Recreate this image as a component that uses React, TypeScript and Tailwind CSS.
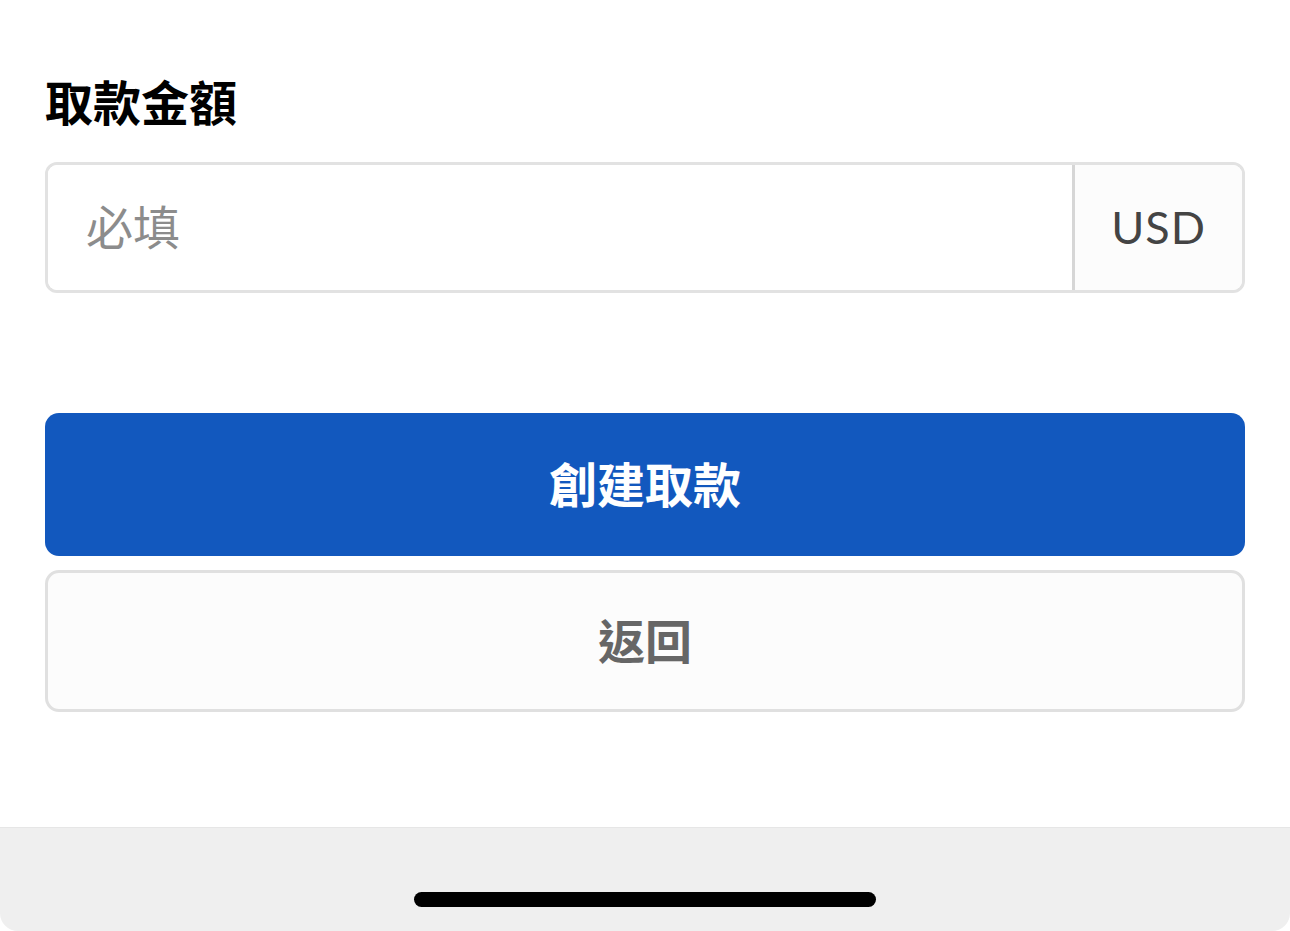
export default function App() {
  return (
    <div
      className="w-[1290px] h-[931px] bg-white flex flex-col overflow-hidden"
      style={{ fontFamily: '"Noto Sans", "Noto Sans CJK TC", sans-serif' }}
    >
      <div className="flex-1 flex flex-col px-[45px] pt-[73px]">
        {/* label */}
        <div className="text-[48px] leading-[60px] font-bold text-black">取款金額</div>

        {/* amount input */}
        <div className="mt-[29px] flex h-[131px] rounded-[12px] border-[3px] border-[#e2e2e2] overflow-hidden">
          <input
            className="flex-1 min-w-0 px-[38px] text-[47px] text-[#333] placeholder:text-[#8c8c8c] bg-white focus:outline-none"
            placeholder="必填"
          />
          <div
            className="w-[170px] flex items-center justify-center bg-[#fcfcfc] border-l-[3px] border-[#d6d6d6] text-[45px] text-[#444] tracking-[1px]"
            style={{ fontFamily: 'Lato, "Noto Sans", sans-serif' }}
          >
            USD
          </div>
        </div>

        {/* actions */}
        <button className="mt-[120px] h-[143px] w-full rounded-[14px] bg-[#1258be] text-white text-[48px] font-bold flex items-center justify-center">
          創建取款
        </button>
        <button className="mt-[14px] h-[142px] w-full rounded-[14px] border-[3px] border-[#e0e0e0] bg-[#fcfcfc] text-[#666] text-[47px] font-bold flex items-center justify-center">
          返回
        </button>
      </div>

      {/* home indicator bar */}
      <div className="h-[104px] bg-[#efefef] border-t border-[#e6e6e6] rounded-b-[18px] flex justify-center pt-[64px]">
        <div className="w-[462px] h-[15px] rounded-full bg-black" />
      </div>
    </div>
  );
}
